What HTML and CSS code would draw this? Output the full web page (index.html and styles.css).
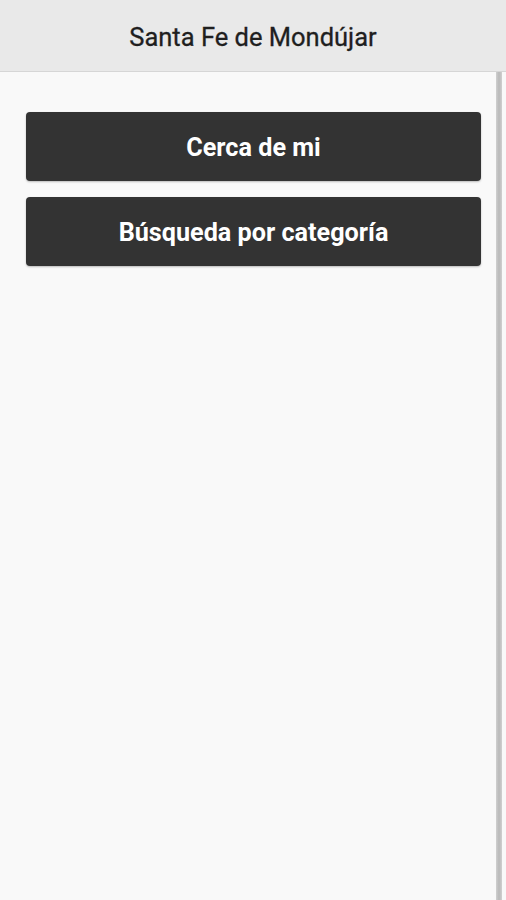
FILE: index.html
```html
<!DOCTYPE html>
<html lang="es">
<head>
<meta charset="utf-8">
<title>Santa Fe de Mondújar</title>
<link rel="stylesheet" href="styles.css">
</head>
<body>
<header class="topbar">
  <h1 class="title">Santa Fe de Mondújar</h1>
</header>
<div class="page">
  <main class="content">
    <button class="btn">Cerca de mi</button>
    <button class="btn">Búsqueda por categoría</button>
  </main>
  <div class="edge"></div>
  <div class="gutter"></div>
</div>
</body>
</html>
```

FILE: styles.css
```css
html, body {
  margin: 0;
  padding: 0;
  height: 100%;
}
body {
  background: #f9f9f9;
  font-family: Roboto, "Noto Sans", sans-serif;
  display: flex;
  flex-direction: column;
}
.topbar {
  height: 71px;
  background: #e9e9e9;
  border-bottom: 1px solid #d6d6d6;
  display: flex;
  align-items: center;
  justify-content: center;
  flex: none;
}
.title {
  margin: 0;
  padding-top: 3px;
  font-size: 25.5px;
  font-weight: 400;
  color: #1f1f1f;
  -webkit-text-stroke: 0.3px #1f1f1f;
}
.page {
  flex: 1;
  display: flex;
}
.content {
  flex: 1;
  padding: 40px 15px 0 26px;
  display: flex;
  flex-direction: column;
  gap: 16px;
}
.btn {
  height: 69px;
  padding-top: 3px;
  background: #333333;
  color: #ffffff;
  border: none;
  border-radius: 4px;
  font-family: Roboto, "Noto Sans", sans-serif;
  font-size: 25.2px;
  font-weight: 700;
  box-shadow: 0 1px 2px rgba(0,0,0,0.25);
}
.edge {
  width: 6px;
  background: linear-gradient(to right, #d0d0d0, #bdbdbd 40%, #bdbdbd 60%, #d0d0d0);
}
.gutter {
  width: 4px;
  background: #f9f9f9;
}
```
